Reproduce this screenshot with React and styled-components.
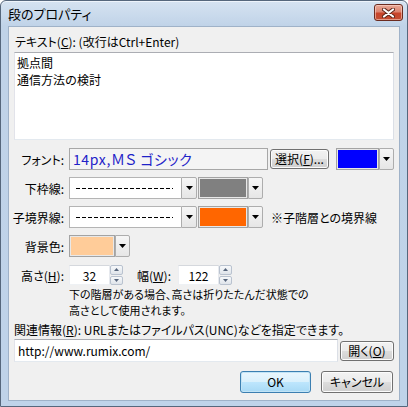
import React from "react";
import styled, { createGlobalStyle } from "styled-components";

const GlobalStyle = createGlobalStyle`
  html, body { margin: 0; padding: 0; background: #ffffff; }
  body {
    font-family: "Noto Sans CJK JP", "Noto Sans", sans-serif;
    font-size: 12px;
    color: #000;
    font-feature-settings: "palt";
  }
  #root { width: 408px; height: 407px; }
  * { box-sizing: border-box; }
`;

const Window = styled.div`
  width: 408px;
  height: 407px;
  display: flex;
  flex-direction: column;
  border: 1px solid #56677c;
  border-radius: 6px 6px 0 0;
  background: linear-gradient(#d6e3f1 0px, #c0d3e8 25px, #bfd3e9 100%);
  padding: 0 7px 5px 7px;
  box-shadow: inset 0 1px 0 #eef4fb;
`;

const TitleBar = styled.div`
  height: 25px;
  flex: none;
  display: flex;
  align-items: flex-start;
  justify-content: space-between;
`;

const TitleText = styled.div`
  font-size: 13px;
  line-height: 25px;
  color: #000;
`;

const CloseButton = styled.div`
  width: 29px;
  height: 17px;
  margin-top: 3px;
  margin-right: -3px;
  border: 1px solid #6b2b1f;
  border-radius: 3px;
  background: linear-gradient(#e9a896 0%, #dc8470 45%, #c8442a 55%, #c24e33 100%);
  box-shadow: inset 0 0 0 1px rgba(255, 220, 210, 0.55);
  display: flex;
  align-items: center;
  justify-content: center;
`;

const Client = styled.div`
  flex: 1;
  display: flex;
  flex-direction: column;
  background: #f0f0f0;
  border: 1px solid #9fb2c8;
  padding: 0 5px 7px 5px;
`;

const TextLabel = styled.div`
  margin-top: 8px;
  padding-left: 1px;
  line-height: 14px;
  white-space: nowrap;
`;

const TextArea = styled.textarea`
  margin-top: 3px;
  width: 100%;
  height: 88px;
  flex: none;
  resize: none;
  outline: none;
  border: 1px solid;
  border-color: #abadb3 #dbdfe6 #e3e9ef #e2e3ea;
  background: #fff;
  padding: 1px 2px;
  font-family: "Noto Sans CJK JP", sans-serif;
  font-size: 12px;
  line-height: 17px;
  color: #000;
  overflow: hidden;
`;

const FormGrid = styled.div`
  margin-top: 8px;
  display: grid;
  grid-template-columns: 50px 1fr;
  grid-auto-rows: 22px;
  column-gap: 5px;
  row-gap: 7px;
`;

const RowLabel = styled.div`
  display: flex;
  justify-content: flex-end;
  align-items: center;
  white-space: nowrap;
`;

const Controls = styled.div`
  display: flex;
  align-items: center;
`;

const FontBox = styled.div`
  width: 199px;
  height: 22px;
  border: 1px solid #a7a7a7;
  background: #f4f4f4;
  color: #1e22c8;
  font-size: 14px;
  font-weight: 400;
  line-height: 20px;
  padding-left: 3px;
  white-space: nowrap;
  letter-spacing: 0.6px;
`;

const PushButton = styled.button`
  width: ${(p) => p.$w}px;
  height: ${(p) => p.$h || 21}px;
  margin-left: ${(p) => p.$ml || 0}px;
  padding: 0;
  font-family: "Noto Sans CJK JP", sans-serif;
  font-size: 12px;
  font-feature-settings: "palt";
  color: #000;
  border: 1px solid ${(p) => (p.$default ? "#3c7fb1" : "#707070")};
  border-radius: 3px;
  background: ${(p) =>
    p.$default
      ? "linear-gradient(#eaf6fd 0%, #d9f0fc 50%, #bee6fd 50%, #a7d9f5 100%)"
      : "linear-gradient(#f2f2f2 0%, #ebebeb 50%, #dddddd 50%, #cfcfcf 100%)"};
  box-shadow: inset 0 0 0 1px ${(p) => (p.$default ? "#c2e4f6" : "#fcfcfc")};
  display: flex;
  align-items: center;
  justify-content: center;
  white-space: nowrap;
  line-height: 1;
`;

const Picker = styled.div`
  display: flex;
  height: 22px;
  margin-left: ${(p) => p.$ml || 0}px;
`;

const Swatch = styled.div`
  width: ${(p) => p.$w}px;
  height: 100%;
  border: 1px solid #a3a3a3;
  background: ${(p) => p.$color};
  box-shadow: inset 0 0 0 1px #e8e8e8;
`;

const DropButton = styled.div`
  width: ${(p) => p.$w || 15}px;
  height: 100%;
  border: 1px solid #adadad;
  border-radius: 0 2px 2px 0;
  background: linear-gradient(#f6f6f6, #e6e6e6);
  display: flex;
  align-items: center;
  justify-content: center;
`;

const Combo = styled.div`
  display: flex;
  width: 128px;
  height: 22px;
`;

const DashField = styled.div`
  flex: 1;
  height: 100%;
  background: #fff;
  border: 1px solid #b4b4b4;
  border-right: none;
  display: flex;
  align-items: center;
  padding: 0 8px 0 6px;
`;

const DashLine = styled.div`
  width: 100%;
  height: 1px;
  background: repeating-linear-gradient(90deg, #000 0 4px, transparent 4px 6px);
`;

const Note = styled.span`
  margin-left: 8px;
  white-space: nowrap;
`;

const NumInput = styled.input`
  width: 41px;
  height: 20px;
  margin-left: ${(p) => p.$ml || 0}px;
  border: 1px solid;
  border-color: #d5d8dd #e6e9ee #eef1f4 #eceef2;
  background: #fff;
  text-align: center;
  font-family: "Noto Sans CJK JP", sans-serif;
  font-size: 12px;
  padding: 0;
  outline: none;
  color: #000;
`;

const Spin = styled.div`
  width: 13px;
  height: 20px;
  display: flex;
  flex-direction: column;
  gap: 1px;
`;

const SpinHalf = styled.div`
  flex: 1;
  border: 1px solid #b9c2cf;
  border-radius: 2px;
  background: linear-gradient(#f7f9fb, #dfe4ea);
  display: flex;
  align-items: center;
  justify-content: center;
`;

const InlineLabel = styled.span`
  margin-left: ${(p) => p.$ml || 0}px;
  white-space: nowrap;
`;

const HelpText = styled.div`
  margin-top: 0;
  padding-left: 55px;
  font-size: 11px;
  line-height: 16px;
  white-space: nowrap;
`;

const RelLabel = styled.div`
  margin-top: 5px;
  line-height: 14px;
  white-space: nowrap;
`;

const UrlRow = styled.div`
  margin-top: 2px;
  display: flex;
  align-items: center;
  height: 23px;
`;

const UrlInput = styled.input`
  flex: 1;
  height: 23px;
  border: 1px solid;
  border-color: #abadb3 #dbdfe6 #e3e9ef #e2e3ea;
  background: #fff;
  padding: 0 3px;
  font-family: "Noto Sans CJK JP", sans-serif;
  font-size: 12px;
  outline: none;
  color: #000;
`;

const ButtonRow = styled.div`
  margin-top: 9px;
  display: flex;
  justify-content: flex-end;
  gap: 10px;
  padding-right: 1px;
`;

const DownArrow = () => (
  <svg width="7" height="4" viewBox="0 0 7 4">
    <polygon points="0,0 7,0 3.5,4" fill="#000" />
  </svg>
);

const SpinArrow = ({ up }) => (
  <svg width="5" height="3" viewBox="0 0 5 3">
    <polygon points={up ? "0,3 5,3 2.5,0" : "0,0 5,0 2.5,3"} fill="#56657c" />
  </svg>
);

const CloseX = () => (
  <svg width="13" height="10" viewBox="0 0 13 10">
    <path d="M2 1.5 L11 8.5 M11 1.5 L2 8.5" stroke="#5a2418" strokeWidth="4" strokeLinecap="round" />
    <path d="M2 1.5 L11 8.5 M11 1.5 L2 8.5" stroke="#ffffff" strokeWidth="2.2" strokeLinecap="round" />
  </svg>
);

const ColorPicker = ({ color, w, ml }) => (
  <Picker $ml={ml}>
    <Swatch $w={w} $color={color} />
    <DropButton>
      <DownArrow />
    </DropButton>
  </Picker>
);

const LineCombo = () => (
  <Combo>
    <DashField>
      <DashLine />
    </DashField>
    <DropButton $w={16}>
      <DownArrow />
    </DropButton>
  </Combo>
);

const Spinner = () => (
  <Spin>
    <SpinHalf>
      <SpinArrow up />
    </SpinHalf>
    <SpinHalf>
      <SpinArrow />
    </SpinHalf>
  </Spin>
);

export default function App() {
  return (
    <>
      <GlobalStyle />
      <Window>
        <TitleBar>
          <TitleText>段のプロパティ</TitleText>
          <CloseButton>
            <CloseX />
          </CloseButton>
        </TitleBar>
        <Client>
          <TextLabel>
            テキスト(<u>C</u>): (改行はCtrl+Enter)
          </TextLabel>
          <TextArea defaultValue={"拠点間\n通信方法の検討"} spellCheck={false} />
          <FormGrid>
            <RowLabel>フォント:</RowLabel>
            <Controls>
              <FontBox>14px,ＭＳ ゴシック</FontBox>
              <PushButton $w={59} $h={20} $ml={2}>
                選択(<u>F</u>)...
              </PushButton>
              <ColorPicker color="#0000ff" w={43} ml={7} />
            </Controls>

            <RowLabel>下枠線:</RowLabel>
            <Controls>
              <LineCombo />
              <ColorPicker color="#808080" w={50} ml={1} />
            </Controls>

            <RowLabel>子境界線:</RowLabel>
            <Controls>
              <LineCombo />
              <ColorPicker color="#ff6600" w={50} ml={1} />
              <Note>※子階層との境界線</Note>
            </Controls>

            <RowLabel>背景色:</RowLabel>
            <Controls>
              <ColorPicker color="#ffcc99" w={46} />
            </Controls>

            <RowLabel>
              高さ(<u>H</u>):
            </RowLabel>
            <Controls>
              <NumInput defaultValue="32" />
              <Spinner />
              <InlineLabel $ml={14}>
                幅(<u>W</u>):
              </InlineLabel>
              <NumInput defaultValue="122" $ml={7} />
              <Spinner />
            </Controls>
          </FormGrid>
          <HelpText>
            下の階層がある場合、高さは折りたたんだ状態での
            <br />
            高さとして使用されます。
          </HelpText>
          <RelLabel>
            関連情報(<u>R</u>): URLまたはファイルパス(UNC)などを指定できます。
          </RelLabel>
          <UrlRow>
            <UrlInput defaultValue="http://www.rumix.com/" spellCheck={false} />
            <PushButton $w={54} $h={20} $ml={2}>
              開く(<u>O</u>)
            </PushButton>
          </UrlRow>
          <ButtonRow>
            <PushButton $w={71} $h={22} $default>
              OK
            </PushButton>
            <PushButton $w={72} $h={22}>
              キャンセル
            </PushButton>
          </ButtonRow>
        </Client>
      </Window>
    </>
  );
}
